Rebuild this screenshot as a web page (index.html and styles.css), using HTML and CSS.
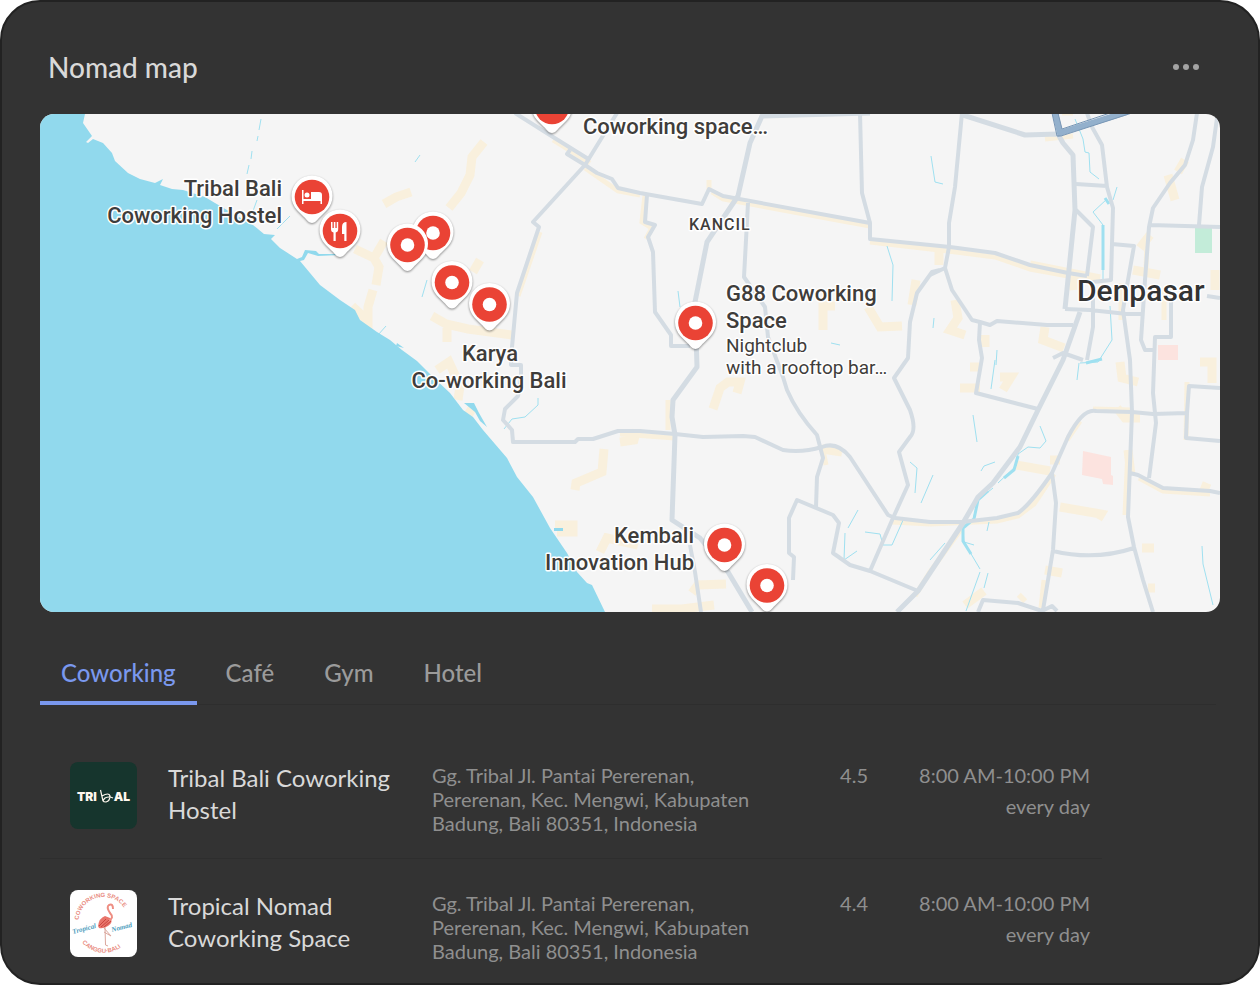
FILE: index.html
```html
<!DOCTYPE html>
<html lang="en">
<head>
<meta charset="utf-8">
<meta name="viewport" content="width=device-width, initial-scale=1">
<title>Nomad map</title>
<link rel="stylesheet" href="styles.css">
</head>
<body>
<main class="card">
  <header class="card-header">
    <h1 class="card-title">Nomad map</h1>
    <button class="more" type="button" aria-label="More options">
      <svg width="28" height="8" viewBox="0 0 28 8" aria-hidden="true"><circle cx="4" cy="4" r="3"/><circle cx="14" cy="4" r="3"/><circle cx="24" cy="4" r="3"/></svg>
    </button>
  </header>

  <svg class="map" viewBox="40 114 1180 498" preserveAspectRatio="xMidYMid slice" role="img" aria-label="Map of coworking spaces near Denpasar">
    <defs>
      <g id="pin-base">
        <path class="pin-drop" d="M0 26 C-3 26 -5 23 -8 20 L-15 13 A20.500 20.500 0 1 1 15 13 L8 20 C5 23 3 26 0 26Z"/>
        <circle class="pin-fill" r="17.300"/>
      </g>
      <g id="pin"><use href="#pin-base"/><circle class="pin-mark" r="6.800"/></g>
    </defs>
    <rect class="land" x="40" y="114" width="1180" height="498"/>

    <g class="built">
      <path d="M484 142L472 157L470 175L461 193L449 208M384 204L396 197L411 192M355 249L374 258L384 241M374 258L379 267L376 285M373 290L368 307L368 321L352 306M432 316L446 324L468 329L512 335M447 328L447 342M480 260L473 272M437 370L449 362L460 386L458 400M467 408L475 413"/>
      <path d="M604 449L602 472L576 483L575 490M620 442L634 440L637 430M555 525L573 525L573 532L557 532M600 552L607 538L638 545M692 593L698 585L726 584M652 609L682 609L714 605M713 409L720 388L728 382L740 382L737 393"/>
      <path d="M823 330L823 306L835 306M868 307L880 327L902 326M912 305L916 280M939 247L939 265M955 300L958 318L950 330L965 335M985 335L985 347M1045 327L1043 340L1064 348M1072 275L1074 290M1150 235L1140 248M1133 270L1160 275M1175 200L1168 175M1178 172L1185 160M1215 270L1215 290M1030 265L1100 279"/>
      <path d="M1000 377L1011 377L1003 390M960 388L980 388M970 367L980 367M1120 362L1122 378L1138 382M1117 408L1125 418L1140 418M1016 465L1050 471M1050 460L1060 460M1060 507L1101 514L1098 519M1045 570L1062 573M1142 548L1154 548M1207 483L1203 493M1128 450L1131 475M1148 588L1155 588M1200 362L1212 362L1212 383M822 449L842 452M965 605L984 591M1020 600L1024 596"/>
      <path class="thin" d="M553 140L590 163M585 168L618 191L640 195M645 195L642 222L652 228L646 239M712 192L723 199L870 226M709 180L709 190M870 242L948 251L995 257L1030 269L1068 276M620 434L675 438M540 232L518 296M930 524L997 521L1018 516L1034 504L1054 474M1093 409L1132 410M1139 478L1163 491L1210 494M1067 440L1080 421M1121 283L1121 320M1128 450L1125 515M962 528L930 572L915 596M892 522L930 524M1186 440L1187 382M1044 580L1041 608M1062 113L1073 113M1045 139L1073 136M668 400L668 430M1147 240L1146 270M1164 290L1164 320M822 445L826 465"/>
    </g>
    <g class="park"><rect x="1195" y="227" width="17" height="26"/></g>
    <path class="hospital" d="M1083 451L1111 457L1111 475L1113 476L1113 485L1103 484L1102 479L1082 475ZM1158 345H1178V360H1158Z"/>

    <g class="stream">
      <path d="M261 119L259 130M258 136L257 141M252 151L251 159M249 165L247 174M257 200L253 211M290 216L277 229M415 162L420 155M427 280L422 297M386 326L378 335M678 291L680 307M887 246L893 265L892 301M931 156L935 182L943 184"/>
      <path d="M1075 119L1083 139L1085 152L1089 153L1090 172L1099 179M1117 187L1113 200M1107 199L1093 212L1103 225L1103 279M1110 306L1112 340L1098 362L1080 363M1079 363L1077 380M995 360L991 389M934 318L933 328M831 343L840 345M997 350L996 365M973 415L977 442"/>
      <path d="M538 398L538 405L525 417L512 419L504 429M1040 426L1046 441L1040 448L1028 447L1018 454L1016 466L998 483M993 488L978 500L973 520L963 529L964 542L980 569M964 542L974 545M995 462L984 466L981 471M989 522L987 531M988 573L984 588M980 572L966 611M1202 546L1203 564L1213 605M910 462L917 468L915 493M933 475L921 503M858 510L848 528M845 533L844 560L857 551M865 532L880 534L883 545L892 545L904 518M930 560L945 543"/>
      <path class="river" d="M1018 456L1014 470L1004 478M988 491L978 500L974 519L963 528L963 541L971 554M1086 363L1102 359M1103 225L1103 270M1105 198L1109 204"/>
    </g>

    <path class="sea" d="M40 114H85L83 123L92 136L86 142L88 143L93 139L103 143L112 153L115 161L128 173L140 179L155 183L163 179L160 185L172 189L183 190L205 197L215 203L227 210L253 225L264 234L275 235L271 239L280 248L297 259L302 257L305 250L316 251L319 254L340 254L340 255L318 256L308 253L304 260L300 261L310 273L320 285L340 300L355 310L360 320L377 332L390 340L402 350L417 361L433 377L450 393L463 410L473 417L483 430L507 458L517 477L533 497L550 528L567 553L577 572L587 583L592 585L605 612H40Z"/>
    <path class="lagoon" d="M464 403L474 403L479 413L487 427L480 421L475 412ZM397 343L404 348L396 346ZM554 528H563V531H554Z"/>

    <g class="road">
      <path d="M515 113L553 137L590 160M570 150L567 154L585 165L597 173L612 179L618 188L640 193L702 204L709 189L723 196L870 223L870 239L950 247L995 253L1030 265L1068 273L1087 276"/>
      <path d="M617 113L585 165L533 222L539 227L517 293L512 347L511 365L521 365L521 377L518 396L505 409L503 420L512 430L513 442L575 442L578 439L593 439L618 431L640 431L675 434L703 437L743 436L755 437L783 450Q802 453 822 447Q837 441 850 457L888 515L895 518L930 522L962 522L997 518L1018 513Q1030 505 1052 473L1068 437Q1083 408 1096 411L1132 412L1153 414L1187 413L1189 386L1220 388M1187 413L1186 438L1220 441"/>
      <path class="wide" d="M870 113L762 116L750 143L738 196L707 242L695 302L697 367L673 400L672 417L675 435L672 520L700 538L728 572L752 612"/>
      <path d="M860 113L862 193L870 223M748 203L744 277L765 307L768 337L783 377L787 390Q797 413 817 435L823 458L817 477L816 507M647 195L645 222L655 225L648 237L653 252L655 312L671 335V346H690M940 270L932 272L917 293L910 322L908 358L894 378L910 410Q917 430 910 437L899 452L908 485L893 518L870 571M793 580L794 557L789 553V518L797 500L833 515L839 523L833 553L850 565L870 571L918 591M690 545L695 572L701 612"/>
      <path class="wide" d="M897 612L918 591L963 523L978 497L993 483L1020 447L1038 410L1063 360L1080 312"/>
      <path d="M962 113L955 187L949 223V247L945 268L952 290L972 320L980 322L990 325L997 321L1047 325H1073M930 275L945 268M980 322L979 340L982 358L976 393L1038 409M1053 358L1063 353L1083 360"/>
      <path class="wide" d="M963 115L1025 135L1058 134L1063 143L1073 155L1075 210L1065 309"/>
      <path d="M1065 309L1090 310L1127 314H1142M1087 113L1092 127L1102 145L1107 187L1113 208L1111 280L1093 282V327L1087 360M1076 184L1107 186M1076 210L1093 227L1087 276M1112 244L1134 246L1128 280L1123 310L1130 360L1132 412L1128 517L1134 547L1143 580L1153 612M1197 113L1193 140L1185 165L1170 183L1153 208L1149 227L1145 280L1141 340L1145 350H1155M1217 118L1213 147L1202 187L1199 225M1150 225L1220 227M1171 300V337H1155L1153 393L1156 423L1149 478M1207 296L1220 298M1130 473L1138 475L1163 488L1210 491L1220 493M1052 473L1056 503L1053 550L1043 610M1053 551Q1095 561 1134 548M978 612L983 600L1018 603L1042 611L1052 606L1057 611"/>
    </g>
    <path class="highway" d="M1055 113L1060 133L1127 112"/>
    <path class="highway-edge" d="M1052 113L1057 136L1061 136L1132 113M1058 113L1062 129L1110 113"/>

    <g class="place">
      <g text-anchor="end"><text x="282" y="196">Tribal Bali</text><text x="282" y="223">Coworking Hostel</text></g>
      <text x="583" y="134">Coworking space…</text>
      <g text-anchor="middle"><text x="490" y="361">Karya</text><text x="489" y="388">Co-working Bali</text></g>
      <text x="726" y="301">G88 Coworking</text><text x="726" y="328">Space</text>
      <g text-anchor="end"><text x="694" y="543">Kembali</text><text x="694" y="570">Innovation Hub</text></g>
    </g>
    <g class="place-note"><text x="726" y="352">Nightclub</text><text x="726" y="374">with a rooftop bar…</text></g>
    <text class="district" x="689" y="230">KANCIL</text>
    <text class="city" x="1077" y="301">Denpasar</text>

    <g class="pins">
      <use href="#pin" x="552" y="107"/>
      <g transform="translate(312 197)"><use href="#pin-base"/><path class="pin-mark" d="M-10-7h1.500v9H-1V-5H7Q10-5 10-2V7H8.500V4H-8.500V7H-10Z"/><circle class="pin-mark" cx="-5" cy="-2" r="2.500"/></g>
      <g transform="translate(340 231)"><use href="#pin-base"/><path class="pin-mark" d="M-9-9h1.500v6h1.300v-6h1.600v6h1.300v-6H-1.800v7Q-1.800 1-4.300 1.500V10H-6.500V1.500Q-9 1-9-2ZM2-4Q2-9 6.500-9V10H4.300V3H2Z"/></g>
      <use href="#pin" x="433" y="233"/>
      <use href="#pin" x="407.500" y="245"/>
      <use href="#pin" x="452" y="282.500"/>
      <use href="#pin" x="489.500" y="304.500"/>
      <use href="#pin" x="695.500" y="323"/>
      <use href="#pin" x="724.500" y="545"/>
      <use href="#pin" x="767" y="585.500"/>
    </g>
  </svg>

  <nav class="tabs" aria-label="Place type">
    <button class="tab active" type="button" aria-current="true">Coworking</button>
    <button class="tab" type="button">Café</button>
    <button class="tab" type="button">Gym</button>
    <button class="tab" type="button">Hotel</button>
  </nav>

  <table class="places">
    <tbody>
    <tr>
      <td class="logo">
        <svg class="logo-art" viewBox="0 0 67 67" role="img" aria-label="Tribal">
          <rect width="67" height="67" fill="#16352d"/>
          <g class="tribal-word"><text x="7" y="39">TRI</text><text x="60" y="39" text-anchor="end">AL</text></g>
          <path d="M30.500 28L33 39M32 34Q39 30 40 34Q40 39 36 40Q31 40 35 36Q39 34 43 36" fill="none" stroke="#fff8ee" stroke-width="1.200"/>
        </svg>
      </td>
      <td class="name">Tribal Bali Coworking Hostel</td>
      <td class="address">Gg. Tribal Jl. Pantai Pererenan, Pererenan, Kec. Mengwi, Kabupaten Badung, Bali 80351, Indonesia</td>
      <td class="rating">4.5</td>
      <td class="hours">8:00 AM-10:00 PM <span class="days">every day</span></td>
    </tr>
    <tr>
      <td class="logo">
        <svg class="logo-art" viewBox="0 0 67 67" role="img" aria-label="Tropical Nomad">
          <defs><path id="arc-top" d="M8.500 32A25 25 0 0 1 58.500 32"/><path id="arc-bottom" d="M11 51A28.500 28.500 0 0 0 60 46"/></defs>
          <rect width="67" height="67" fill="#fff"/>
          <g class="ring-word"><text><textPath href="#arc-top" startOffset="2">COWORKING SPACE</textPath></text><text><textPath href="#arc-bottom" startOffset="2">CANGGU·BALI</textPath></text></g>
          <g class="script-word"><text transform="translate(3 44) rotate(-15)">Tropical</text><text transform="translate(42 42) rotate(-14)">Nomad</text></g>
          <path d="M28 36Q29 28 35 26L40 28Q44 32 38 36Q33 39 29 38Z" fill="#e9756b"/>
          <path d="M38 31Q45 28 40 23Q36 17 39 15Q43 13 43 19" fill="none" stroke="#ee8e83" stroke-width="2"/>
          <path d="M29 36L36 29M31 37L39 30M34 37L41 31" stroke="#c9463f" stroke-width="1"/>
          <path d="M35 37L35.500 55L38 56M34 38L41 46L34 42" fill="none" stroke="#dba79d" stroke-width="1"/>
        </svg>
      </td>
      <td class="name">Tropical Nomad Coworking Space</td>
      <td class="address">Gg. Tribal Jl. Pantai Pererenan, Pererenan, Kec. Mengwi, Kabupaten Badung, Bali 80351, Indonesia</td>
      <td class="rating">4.4</td>
      <td class="hours">8:00 AM-10:00 PM <span class="days">every day</span></td>
    </tr>
    </tbody>
  </table>
</main>
</body>
</html>
```

FILE: styles.css
```css
* { box-sizing: border-box; }
body { margin: 0; background: #fff; font-family: Lato, "Open Sans", sans-serif; color: #d9d9d9; }

.card { background: #333; border: 2px solid #222; border-radius: 40px; padding: 0 38px; overflow: hidden; }
.card-header { display: flex; align-items: center; justify-content: space-between; padding: 48px 20px 30px 8px; }
.card-title { margin: 0; font-size: 28px; line-height: 34px; font-weight: 500; }
.more { display: flex; padding: 4px 0; border: 0; background: none; fill: #a3a3a3; }

.map { display: block; width: 100%; aspect-ratio: 1180 / 498; border-radius: 14px; overflow: hidden; font-family: Roboto, sans-serif; }
.land { fill: #f5f5f5; }
.sea { fill: #91d9ed; }
.lagoon { fill: #91d9ed; }
.park { fill: #c3ecd9; }
.hospital { fill: #fce3df; }
.built { fill: none; stroke: #f9f0dd; stroke-width: 9; }
.built .thin { stroke-width: 5; }
.stream { fill: none; stroke: #9fe0f0; stroke-width: 1; }
.stream .river { stroke-width: 3; }
.road { fill: none; stroke: #d4dce3; stroke-width: 4; stroke-linejoin: round; }
.road .wide { stroke-width: 5; }
.highway { fill: none; stroke: #93b0cc; stroke-width: 6; }
.highway-edge { fill: none; stroke: #7896b5; stroke-width: 1; }

.place, .place-note, .district, .city { fill: #3f3d3b; stroke: #fff; stroke-width: 3px; stroke-linejoin: round; paint-order: stroke; }
.place { font-size: 22px; font-weight: 500; }
.place-note { font-size: 19px; }
.district { font-size: 16px; font-weight: 500; letter-spacing: 1px; }
.city { font-size: 30px; font-weight: 500; fill: #333; }

.pins { filter: drop-shadow(0 1px 1px rgb(0 0 0 / 45%)); }
.pin-drop { fill: #fff; }
.pin-fill { fill: #ea4335; }
.pin-mark { fill: #fff; }

.tabs { display: flex; gap: 8px; margin: 32px 4px 26px 0; border-bottom: 1px solid #2e2e2e; }
.tab { margin-bottom: -1px; padding: 12px 21px 11px; border: 0; border-bottom: 4px solid transparent; background: none; color: #9b9b9b; font: 500 24px/34px Lato, sans-serif; }
.tab.active { color: #7a98ee; border-bottom-color: #7a98ee; }

.places { width: 90%; table-layout: fixed; border-collapse: collapse; }
.places td { padding: 32px 0 23px; vertical-align: top; border-bottom: 1px solid #2e2e2e; }
.places tr:last-child td { border-bottom: 0; padding-bottom: 20px; }
.places .logo, .places .name { padding-top: 31px; }
.places .logo { width: 128px; padding-left: 30px; }
.logo-art { display: block; width: 67px; height: 67px; border-radius: 8px; }
.places .name { width: 264px; padding-right: 24px; font-size: 24px; line-height: 32px; }
.places .address { width: 360px; padding-right: 24px; }
.address, .rating, .hours { font-size: 20px; line-height: 24px; color: #8f8f8f; }
.places .rating { width: 76px; text-align: right; }
.places .hours { padding-right: 12px; text-align: right; white-space: nowrap; }
.days { display: block; margin-top: 7px; }

.tribal-word { font: 900 12px Inter, sans-serif; fill: #fff8ee; }
.ring-word { font: 700 6px "Liberation Sans", sans-serif; fill: #e98b80; }
.script-word { font: italic 700 7px "Liberation Serif", serif; fill: #4c9dbd; }
```
